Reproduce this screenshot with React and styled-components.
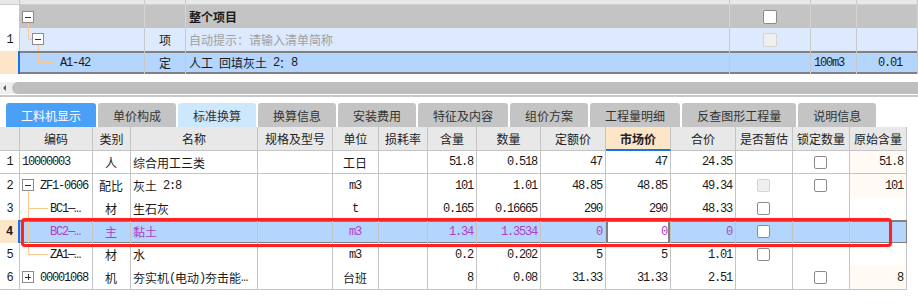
import React from 'react';
import styled, { createGlobalStyle, css } from 'styled-components';

const GlobalStyle = createGlobalStyle`
  html, body {
    margin: 0;
    padding: 0;
    background: #fff;
  }
  body {
    font-family: "Noto Sans CJK SC", "Noto Sans", sans-serif;
    font-size: 12px;
    color: #1a1a1a;
  }
`;

const GRID_LINE = '#c4c4c4';
const FRAME = '#808080';
const TREE_LINE = '#fdc88c';
const PURPLE = '#b03ec6';

const Page = styled.div`
  width: 918px;
  height: 307px;
  overflow: hidden;
  background: #fff;
  display: flex;
  flex-direction: column;
`;

const Mono = styled.span`
  font-family: "Liberation Mono", monospace;
  font-size: 12px;
  letter-spacing: -1.2px;
  white-space: pre;
`;

function renderText(text) {
  if (!text) return null;
  return text
    .split(/([\x20-\x7e—…]+)/)
    .filter(Boolean)
    .map((part, i) =>
      /^[\x20-\x7e—…]+$/.test(part) ? <Mono key={i}>{part}</Mono> : <span key={i}>{part}</span>
    );
}

/* ---------- tree glyphs ---------- */

const TreeSvg = styled.svg`
  display: block;
  flex: none;
  align-self: flex-start;
`;

function Tree({ width, lines = [], box }) {
  return (
    <TreeSvg width={width} height="23" viewBox={`0 0 ${width} 23`}>
      {lines.map((d, i) => (
        <path key={i} d={d} stroke={TREE_LINE} fill="none" />
      ))}
      {box && (
        <g>
          <rect x={box.x + 0.5} y={box.y + 0.5} width="11" height="11" fill="#fff" stroke="#8c8c8c" />
          <path d={`M${box.x + 3} ${box.y + 6.5}H${box.x + 9}`} stroke="#333" />
          {box.plus && <path d={`M${box.x + 6.5} ${box.y + 3}V${box.y + 9}`} stroke="#333" />}
        </g>
      )}
    </TreeSvg>
  );
}

const Checkbox = styled.span`
  display: inline-block;
  box-sizing: border-box;
  width: ${p => p.$size || 13}px;
  height: ${p => p.$size || 13}px;
  border-radius: 2px;
  border: 1px solid ${p => (p.$disabled ? '#d4d4d4' : '#8c8c8c')};
  background: ${p => (p.$disabled ? '#efefef' : '#fff')};
`;

/* ---------- top (bill) table ---------- */

const TopRow = styled.div`
  display: grid;
  grid-template-columns: 20px 125px 41px 544px 81px 46px 61px;
  height: ${p => (p.$variant === 'strip' ? 5 : 23)}px;
`;

const topVariants = {
  strip: css`
    background: #e8e8e8;
    border-bottom: 1px solid #d0d0d0;
  `,
  project: css`
    background: #c4c4c4;
    border-right-color: #d4d4d4;
    font-weight: 700;
  `,
  item: css`
    background: #dde9fc;
  `,
  selected: css`
    background: #b4d5fd;
    box-shadow: inset 0 2px ${FRAME}, inset 0 -2px ${FRAME};
  `,
};

const TopCell = styled.div`
  box-sizing: border-box;
  display: flex;
  align-items: center;
  white-space: nowrap;
  border-right: 1px solid #c8c8c8;
  padding: 0 ${p => p.$pr || 0}px 0 ${p => p.$pl || 0}px;
  justify-content: ${p => (p.$align === 'center' ? 'center' : p.$align === 'right' ? 'flex-end' : 'flex-start')};
  color: ${p => (p.$hint ? '#a0a0a0' : 'inherit')};
  ${p => topVariants[p.$variant]}
`;

const TopGutter = styled.div`
  box-sizing: border-box;
  display: flex;
  align-items: center;
  justify-content: center;
  background: ${p => (p.$variant === 'strip' ? '#e8e8e8' : p.$variant === 'selected' ? '#fde5c9' : '#fff')};
  border-right: ${p => (p.$variant === 'selected' ? '2px solid #1672e6' : '1px solid #c8c8c8')};
  ${p => p.$variant === 'strip' && 'border-bottom: 1px solid #d0d0d0;'}
`;

/* ---------- scrollbar & tabs ---------- */

const ScrollTrack = styled.div`
  margin-top: 8px;
  height: 12px;
  display: flex;
  align-items: stretch;
  background: #efefef;
`;

const ScrollArrow = styled.span`
  width: 0;
  height: 0;
  align-self: center;
  margin: 0 6px 0 3px;
  border-top: 3px solid transparent;
  border-bottom: 3px solid transparent;
  border-right: 3px solid #5a5a5a;
`;

const ScrollThumb = styled.div`
  flex: 1;
  background: #bebebe;
  border-radius: 6px 0 0 6px;
`;

const Divider = styled.div`
  margin-top: 1px;
  height: 2px;
  background: #c8c8c8;
`;

const TabBar = styled.div`
  display: flex;
  gap: 2px;
  margin-top: 6px;
  padding-left: 6px;
  height: 24px;
`;

const tabTones = {
  active: css`
    background: #4a9ff7;
    color: #fff;
  `,
  light: css`
    background: #cde7fd;
    color: #333;
  `,
  plain: css`
    background: #c4c4c4;
    color: #333;
  `,
};

const Tab = styled.div`
  display: flex;
  align-items: center;
  padding: 0 15px;
  border-radius: 3px 3px 0 0;
  white-space: nowrap;
  ${p => tabTones[p.$tone || 'plain']}
`;

/* ---------- resource grid ---------- */

const GRID_COLS = [20, 73, 38, 127, 75, 46, 49, 49, 64, 65, 65, 65, 57, 57, 57]
  .map(w => `${w}px`)
  .join(' ');

const GridWrap = styled.div`
  position: relative;
`;

const HeadRow = styled.div`
  display: grid;
  grid-template-columns: ${GRID_COLS};
  height: 24px;
`;

const HeadCell = styled.div`
  box-sizing: border-box;
  display: flex;
  align-items: center;
  justify-content: center;
  white-space: nowrap;
  color: #222;
  border-right: 1px solid ${GRID_LINE};
  background: ${p => (p.$hl ? '#fde6c8' : '#e8e8e8')};
  border-bottom: ${p => (p.$hl ? '2px solid #1672e6' : `1px solid ${GRID_LINE}`)};
  font-weight: ${p => (p.$hl ? 700 : 400)};
`;

const BodyRow = styled.div`
  display: grid;
  grid-template-columns: ${GRID_COLS};
  height: 23px;
`;

const Gutter = styled.div`
  box-sizing: border-box;
  display: flex;
  align-items: center;
  justify-content: center;
  border-bottom: 1px solid ${GRID_LINE};
  border-right: ${p => (p.$sel ? '2px solid #1672e6' : `1px solid ${GRID_LINE}`)};
  background: ${p => (p.$sel ? '#fde5c9' : '#fff')};
  font-weight: ${p => (p.$sel ? 700 : 400)};
`;

const Cell = styled.div`
  box-sizing: border-box;
  display: flex;
  align-items: center;
  white-space: nowrap;
  padding: 0 3px 0 2px;
  border-right: 1px solid ${GRID_LINE};
  border-bottom: 1px solid ${GRID_LINE};
  justify-content: ${p => (p.$align === 'center' ? 'center' : p.$align === 'right' ? 'flex-end' : 'flex-start')};
  background: ${p => (p.$tint ? '#fffaf4' : '#fff')};
  ${p =>
    p.$sel &&
    css`
      color: ${PURPLE};
      background: ${p.$edit ? '#fff' : '#b4d5fd'};
      border-bottom-color: ${FRAME};
      box-shadow: inset 0 2px ${FRAME}, inset 0 -1px ${FRAME}
        ${p.$edit ? `, inset 2px 0 ${FRAME}, inset -2px 0 ${FRAME}` : ''};
      ${p.$last && `border-right-color: ${FRAME};`}
    `}
`;

const RedFrame = styled.div`
  position: absolute;
  left: 21px;
  top: 91px;
  width: 871px;
  height: 29px;
  box-sizing: border-box;
  border: 3px solid #ff2222;
  border-radius: 4px;
  box-shadow: 0 0 1px rgba(255, 40, 40, 0.6);
  pointer-events: none;
`;

const COLUMNS = [
  { key: 'code', title: '编码', align: 'left' },
  { key: 'type', title: '类别', align: 'center' },
  { key: 'name', title: '名称', align: 'left' },
  { key: 'spec', title: '规格及型号', align: 'left' },
  { key: 'unit', title: '单位', align: 'center' },
  { key: 'loss', title: '损耗率', align: 'right' },
  { key: 'qty', title: '含量', align: 'right' },
  { key: 'amount', title: '数量', align: 'right' },
  { key: 'quota', title: '定额价', align: 'right' },
  { key: 'market', title: '市场价', align: 'right', hl: true },
  { key: 'total', title: '合价', align: 'right' },
  { key: 'est', title: '是否暂估', align: 'center', check: true },
  { key: 'lock', title: '锁定数量', align: 'center', check: true },
  { key: 'orig', title: '原始含量', align: 'right', tint: true },
];

const ROWS = [
  { no: '1', code: '10000003', type: '人', name: '综合用工三类', unit: '工日', qty: '51.8', amount: '0.518', quota: '47', market: '47', total: '24.35', lock: true, orig: '51.8' },
  { no: '2', tree: 'minus', code: 'ZF1-0606', type: '配比', name: '灰土 2:8', unit: 'm3', qty: '101', amount: '1.01', quota: '48.85', market: '48.85', total: '49.34', est: 'disabled', lock: true, orig: '101' },
  { no: '3', tree: 'mid', code: 'BC1—…', type: '材', name: '生石灰', unit: 't', qty: '0.165', amount: '0.16665', quota: '290', market: '290', total: '48.33', est: true },
  { no: '4', tree: 'mid', code: 'BC2—…', type: '主', name: '黏土', unit: 'm3', qty: '1.34', amount: '1.3534', quota: '0', market: '0', total: '0', est: true, selected: true },
  { no: '5', tree: 'last', code: 'ZA1—…', type: '材', name: '水', unit: 'm3', qty: '0.2', amount: '0.202', quota: '5', market: '5', total: '1.01', est: true },
  { no: '6', tree: 'plus', code: '00001068', type: '机', name: '夯实机(电动)夯击能…', unit: '台班', qty: '8', amount: '0.08', quota: '31.33', market: '31.33', total: '2.51', lock: true, orig: '8' },
];

const TABS = [
  { label: '工料机显示', tone: 'active' },
  { label: '单价构成' },
  { label: '标准换算', tone: 'light' },
  { label: '换算信息' },
  { label: '安装费用' },
  { label: '特征及内容' },
  { label: '组价方案' },
  { label: '工程量明细' },
  { label: '反查图形工程量' },
  { label: '说明信息' },
];

function TreeMark({ kind }) {
  if (kind === 'minus') return <Tree width={18} lines={['M6.5 17V23']} box={{ x: 0, y: 5 }} />;
  if (kind === 'plus') return <Tree width={18} box={{ x: 0, y: 5, plus: true }} />;
  if (kind === 'mid') return <Tree width={28} lines={['M6.5 0V23', 'M6.5 11.5H26']} />;
  if (kind === 'last') return <Tree width={28} lines={['M6.5 0V11.5', 'M6.5 11.5H26']} />;
  return null;
}

function cellContent(col, row) {
  const value = row[col.key];
  if (col.check) {
    if (!value) return null;
    return <Checkbox $disabled={value === 'disabled'} />;
  }
  if (col.key === 'code') {
    return (
      <>
        <TreeMark kind={row.tree} />
        {renderText(value)}
      </>
    );
  }
  return renderText(value);
}

export default function App() {
  return (
    <>
      <GlobalStyle />
      <Page>
        <div>
          <TopRow $variant="strip">
            <TopGutter $variant="strip" />
            {[0, 1, 2, 3, 4, 5].map(i => (
              <TopCell key={i} $variant="strip" />
            ))}
          </TopRow>

          <TopRow>
            <TopGutter />
            <TopCell $variant="project" $pl={2}>
              <Tree width={18} lines={['M6.5 18V23']} box={{ x: 0, y: 6 }} />
            </TopCell>
            <TopCell $variant="project" />
            <TopCell $variant="project" $pl={3}>整个项目</TopCell>
            <TopCell $variant="project" $align="center">
              <Checkbox $size={14} />
            </TopCell>
            <TopCell $variant="project" />
            <TopCell $variant="project" />
          </TopRow>

          <TopRow>
            <TopGutter>
              <Mono>1</Mono>
            </TopGutter>
            <TopCell $variant="item" $pl={2}>
              <Tree
                width={24}
                lines={['M6.5 0V11.5', 'M6.5 11.5H10', 'M16.5 17V23']}
                box={{ x: 10, y: 5 }}
              />
            </TopCell>
            <TopCell $variant="item" $align="center">项</TopCell>
            <TopCell $variant="item" $pl={3} $hint>自动提示：请输入清单简称</TopCell>
            <TopCell $variant="item" $align="center">
              <Checkbox $size={14} $disabled />
            </TopCell>
            <TopCell $variant="item" />
            <TopCell $variant="item" />
          </TopRow>

          <TopRow>
            <TopGutter $variant="selected" />
            <TopCell $variant="selected" $pl={2}>
              <Tree width={38} lines={['M16.5 2V11.5', 'M16.5 11.5H31']} />
              <Mono>A1-42</Mono>
            </TopCell>
            <TopCell $variant="selected" $align="center">定</TopCell>
            <TopCell $variant="selected" $pl={3}>{renderText('人工 回填灰土 2：8')}</TopCell>
            <TopCell $variant="selected" />
            <TopCell $variant="selected" $pl={3}>
              <Mono>100m3</Mono>
            </TopCell>
            <TopCell $variant="selected" $align="right" $pr={15}>
              <Mono>0.01</Mono>
            </TopCell>
          </TopRow>
        </div>

        <ScrollTrack>
          <ScrollArrow />
          <ScrollThumb />
        </ScrollTrack>
        <Divider />

        <TabBar>
          {TABS.map(t => (
            <Tab key={t.label} $tone={t.tone}>
              {t.label}
            </Tab>
          ))}
        </TabBar>

        <GridWrap>
          <HeadRow>
            <HeadCell />
            {COLUMNS.map(c => (
              <HeadCell key={c.key} $hl={c.hl}>
                {c.title}
              </HeadCell>
            ))}
          </HeadRow>

          {ROWS.map(row => (
            <BodyRow key={row.no}>
              <Gutter $sel={row.selected}>
                <Mono>{row.no}</Mono>
              </Gutter>
              {COLUMNS.map((c, i) => (
                <Cell
                  key={c.key}
                  $align={c.align}
                  $tint={c.tint && !!row.orig}
                  $sel={row.selected}
                  $edit={c.key === 'market'}
                  $last={i === COLUMNS.length - 1}
                >
                  {cellContent(c, row)}
                </Cell>
              ))}
            </BodyRow>
          ))}

          <RedFrame />
        </GridWrap>
      </Page>
    </>
  );
}
